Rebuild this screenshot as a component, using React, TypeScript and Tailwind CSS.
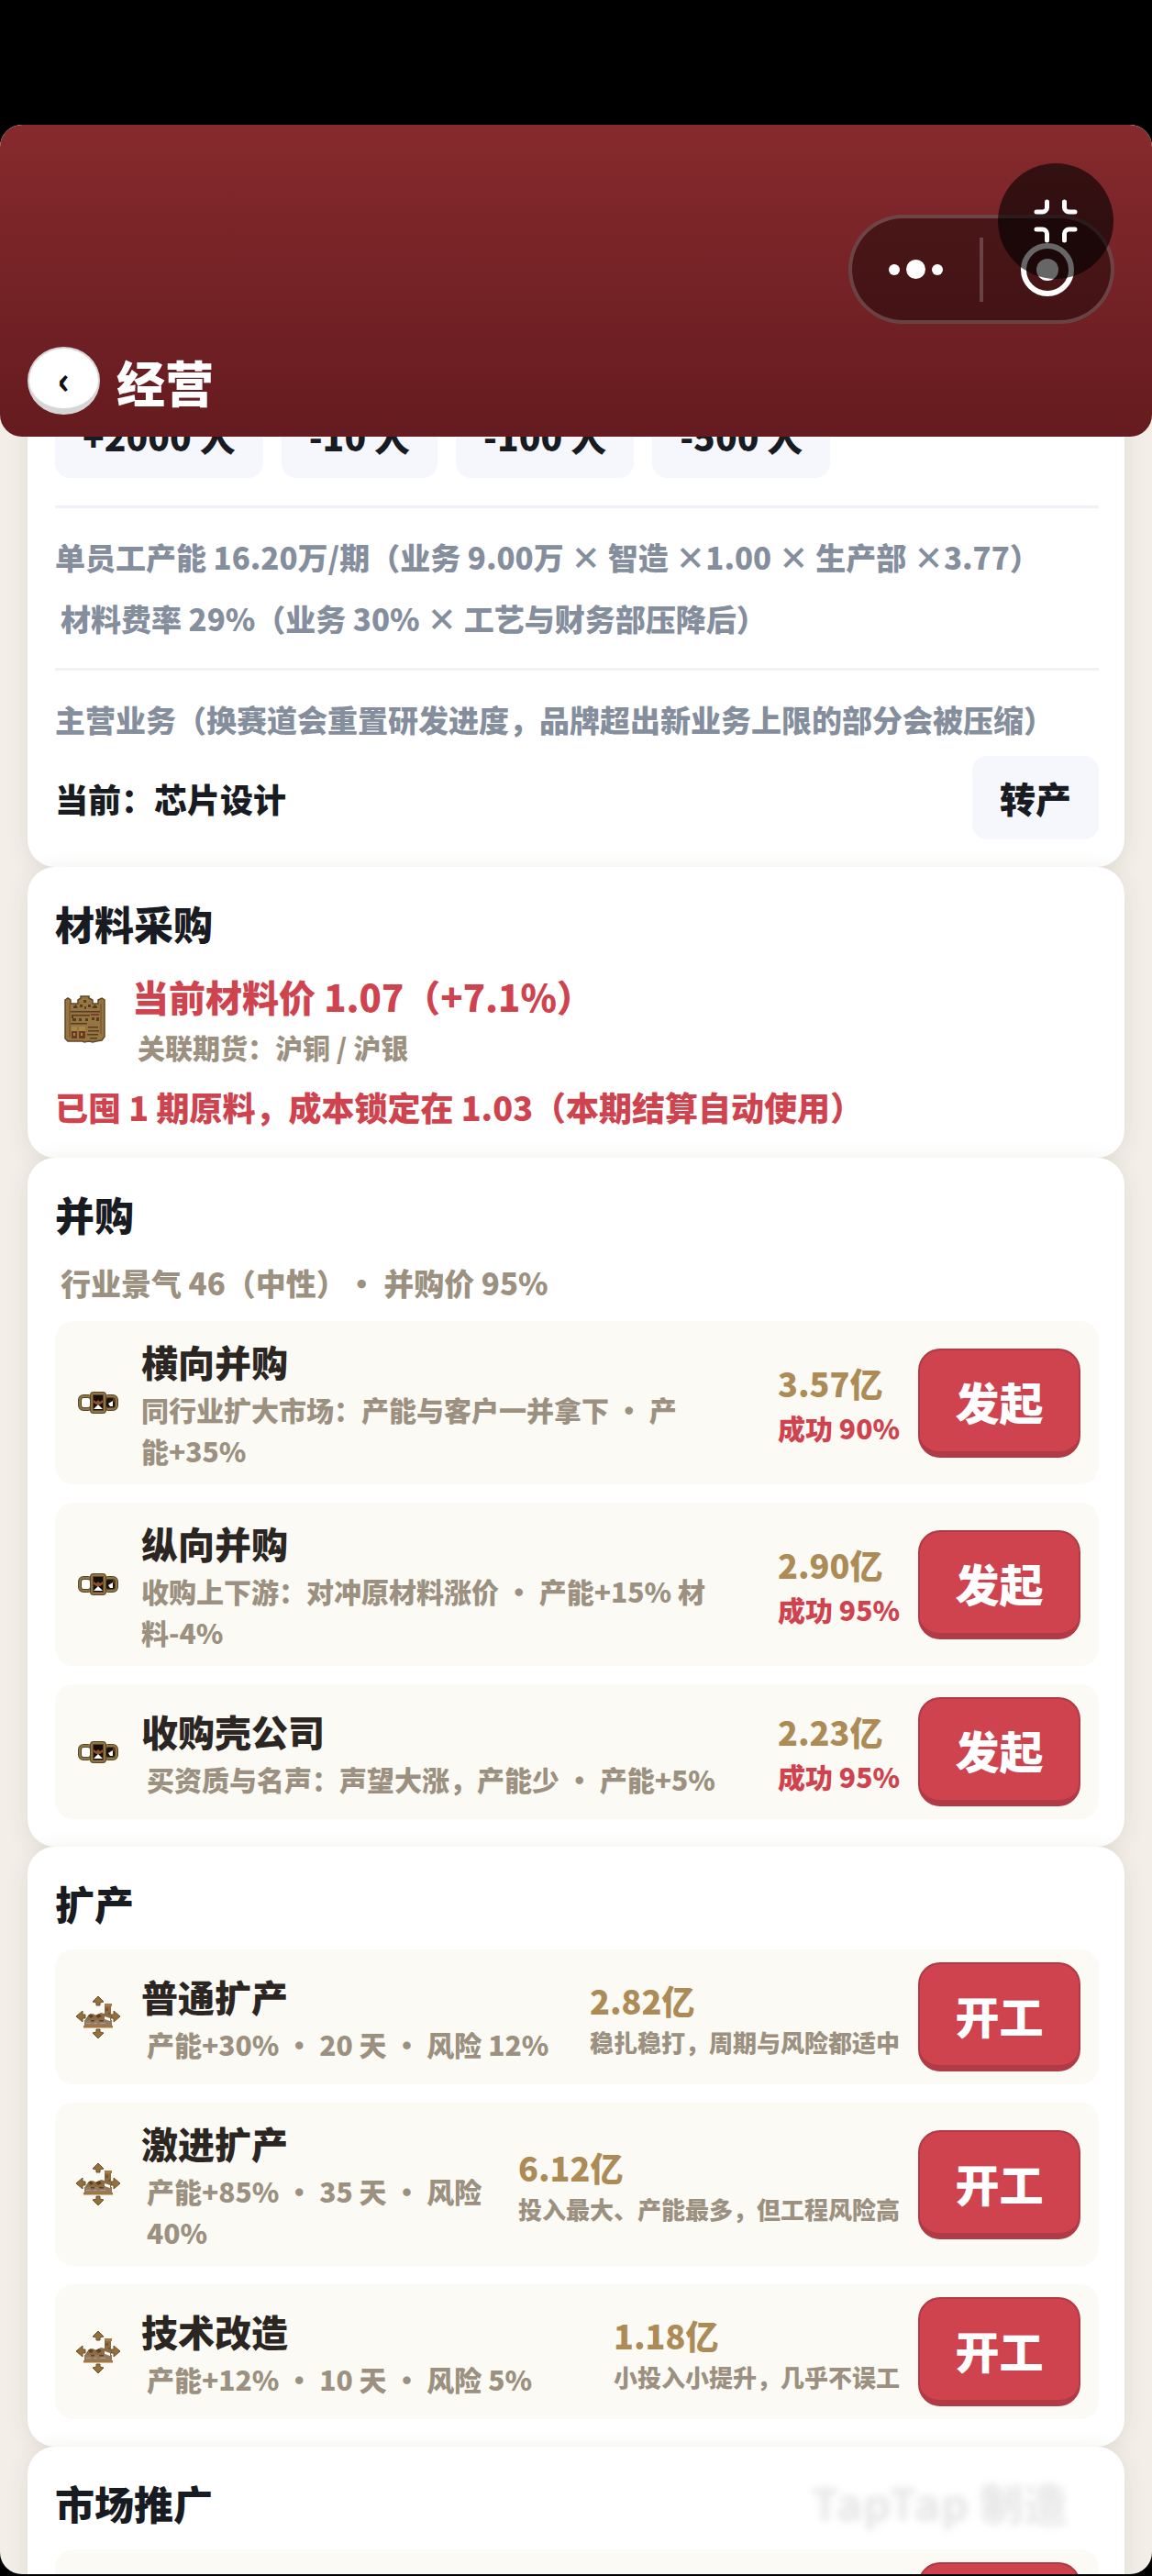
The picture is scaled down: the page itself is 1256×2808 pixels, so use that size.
import type { ReactNode } from 'react'

type MergerDeal = {
  name: string
  detail: string
  inset?: boolean
  price: string
  chance: string
}

type ExpansionPlan = {
  name: string
  detail: string
  price: string
  note: string
}

const headcountSteps = ['+2000 人', '-10 人', '-100 人', '-500 人']

const mergers: MergerDeal[] = [
  {
    name: '横向并购',
    detail: '同行业扩大市场：产能与客户一并拿下 • 产\n能+35%',
    price: '3.57亿',
    chance: '成功 90%',
  },
  {
    name: '纵向并购',
    detail: '收购上下游：对冲原材料涨价 • 产能+15% 材\n料-4%',
    price: '2.90亿',
    chance: '成功 95%',
  },
  {
    name: '收购壳公司',
    detail: '买资质与名声：声望大涨，产能少 • 产能+5%',
    inset: true,
    price: '2.23亿',
    chance: '成功 95%',
  },
]

const expansions: ExpansionPlan[] = [
  {
    name: '普通扩产',
    detail: '产能+30% • 20 天 • 风险 12%',
    price: '2.82亿',
    note: '稳扎稳打，周期与风险都适中',
  },
  {
    name: '激进扩产',
    detail: '产能+85% • 35 天 • 风险\n40%',
    price: '6.12亿',
    note: '投入最大、产能最多，但工程风险高',
  },
  {
    name: '技术改造',
    detail: '产能+12% • 10 天 • 风险 5%',
    price: '1.18亿',
    note: '小投入小提升，几乎不误工',
  },
]

function WarehouseIcon() {
  return (
    <svg width="46" height="52" viewBox="0 0 46 52" aria-hidden>
      <path
        d="M1 5l3-2 3 2v4h8V5l3-2V1h9v2l4 2v4h6V5l4-2 3 2v40l-3 4-6 1-4 1-4-1-5 1-2-1H4l-3-3z"
        fill="#967540"
        stroke="#5f4727"
        strokeWidth="1.500"
      />
      <path d="M6 9v37M40 9v33" stroke="#7a5a30" strokeWidth="1.500" />
      <g fill="#553d22">
        <path d="M7 17h32v1.500H7zM7 30h18v1.500H7z" />
        <path d="M10 12l3-2 2 4h-5zM30 14l3-4 3 2v2zM17 10h3v3h-3zM26 10h3v3h-3zM21 5h3v3h-3zM22 12h2v3h-2z" />
        <path d="M8 21h20v1.500H10V25H8z" />
        <path d="M9 25h4v3H9zM16 25h3v3h-3zM23 25h3v3h-3zM30 24h3v3h-3zM35 24h3v4h-3z" />
        <path d="M26 34h11v1.500H26zM26 38h12v1.500H26zM25 42h12v1.500H25zM28 46h8v1.500h-8z" />
      </g>
      <path d="M29 20h9v2h-9z" fill="#7c3b35" />
      <path d="M8 34h6v13H8zM16 34h7v13h-7z" fill="#6b3a22" />
      <path d="M8 34h6v5H8zM16 34h7v5h-7zM10 41h2v3h-2zM18 41h2v3h-2z" fill="#a98549" />
    </svg>
  )
}

function ChainIcon() {
  return (
    <svg width="44" height="24" viewBox="0 0 44 24" aria-hidden>
      <rect x="2" y="5" width="13" height="14" rx="4" fill="#fff" stroke="#57462a" strokeWidth="4" />
      <rect x="2" y="5" width="13" height="14" rx="4" fill="none" stroke="#8f7743" strokeWidth="2" />
      <rect x="29" y="5" width="13" height="14" rx="4" fill="#1b120c" stroke="#57462a" strokeWidth="4" />
      <rect x="29" y="5" width="13" height="14" rx="4" fill="none" stroke="#8f7743" strokeWidth="2" />
      <path d="M33 13l5-3v6h-3z" fill="#fff" />
      <path d="M38 7h2v5l-2-2z" fill="#74301f" />
      <rect x="15" y="2" width="14" height="20" rx="2" fill="#170e08" stroke="#57462a" strokeWidth="4" />
      <rect x="15" y="2" width="14" height="20" rx="2" fill="none" stroke="#94733f" strokeWidth="2" />
      <path d="M17 9l3 2 2-2 2 2 3-2v3l-3 2h-4l-3-2z" fill="#8a5230" />
      <path d="M17 19l5-5 5 5z" fill="#fff" />
    </svg>
  )
}

function FactoryIcon() {
  return (
    <svg width="50" height="46" viewBox="0 0 50 46" aria-hidden>
      <g fill="#94703c" stroke="#6b5029" strokeWidth="1">
        <path d="M25 0l6 6-4 1v3h-4V7l-4-1z" />
        <path d="M25 46l6-6-4-1v-3h-4v3l-4 1z" />
        <path d="M1 22l7-6v4h3v4H8v4z" />
        <path d="M49 22l-7-6v4h-3v4h3v4z" />
      </g>
      <path d="M10 27l4-6 5-2 4 2 5-3 4 1V9h7v24H10z" fill="#8d6b43" />
      <path d="M32 8h8v3h-8z" fill="#a27c49" />
      <path d="M10 26h30v8H10z" fill="#957a62" />
      <path d="M9 32h32v2.500H9z" fill="#a3763c" />
      <path d="M14 21l3-2 3 3-3 2zM22 21l4-2 3 3-4 2zM17 26h4v1.500h-4zM26 26h5v1.500h-5z" fill="#5d4122" />
      <path d="M33 13h3v3h-3zM36 18h2v2h-2z" fill="#765530" />
      <path d="M32 22l6 2v3l-6-2z" fill="#fff" />
      <path d="M12 29h5v1h-5zM20 29h4v1h-4zM27 29h6v1h-6z" fill="#b59a85" />
    </svg>
  )
}

function Capsule() {
  return (
    <div className="absolute top-[98px] right-[41px] flex h-[119px] w-[290px] items-center rounded-full border-4 border-white/20 bg-black/40">
      <button type="button" aria-label="更多" className="flex flex-1 items-center justify-center gap-[7px]">
        <span className="size-3 rounded-full bg-white" />
        <span className="size-[21px] rounded-full bg-white" />
        <span className="size-3 rounded-full bg-white" />
      </button>
      <span className="h-[70px] w-1 bg-white/20" />
      <button type="button" aria-label="关闭" className="flex flex-1 justify-center">
        <span className="flex size-[58px] items-center justify-center rounded-full border-[6px] border-white">
          <span className="size-6 rounded-full bg-white" />
        </span>
      </button>
    </div>
  )
}

function ShrinkButton() {
  return (
    <button
      type="button"
      aria-label="退出全屏"
      className="absolute top-[42px] right-[42px] flex size-[126px] items-center justify-center rounded-full bg-black/60"
    >
      <svg
        width="48"
        height="48"
        viewBox="0 0 48 48"
        fill="none"
        stroke="#fff"
        strokeWidth="5"
        strokeLinecap="round"
        aria-hidden
      >
        <path d="M3 14h6.500a5 5 0 0 0 5-5V3" />
        <path d="M45 14h-6.500a5 5 0 0 1-5-5V3" />
        <path d="M3 33h6.500a5 5 0 0 1 5 5v7" />
        <path d="M45 33h-6.500a5 5 0 0 0-5 5v7" />
      </svg>
    </button>
  )
}

function Card({ title, children }: { title?: string; children: ReactNode }) {
  return (
    <section
      className={`rounded-[30px] bg-white pr-7 pb-[30px] pl-[30px] shadow-[0_4px_24px_rgba(60,60,20,0.1)] ${
        title ? 'pt-[30px]' : ''
      }`}
    >
      {title && <h2 className="mb-5 text-[43px] leading-[62px] text-[#191b22]">{title}</h2>}
      {children}
    </section>
  )
}

function SoftButton({ children }: { children: ReactNode }) {
  return (
    <button
      type="button"
      className="shrink-0 rounded-2xl bg-[#f6f7fc] px-[30px] py-4 text-[39px] leading-[59px] text-[#191b22]"
    >
      {children}
    </button>
  )
}

function ActionRow({
  icon,
  name,
  detail,
  inset,
  aside,
  action,
}: {
  icon: ReactNode
  name: string
  detail: string
  inset?: boolean
  aside: ReactNode
  action: string
}) {
  return (
    <li className="flex items-center gap-5 rounded-[20px] bg-[#fbfaf5] px-5 py-3.5">
      <span className="flex w-[54px] shrink-0 justify-center">{icon}</span>
      <div className="flex-1">
        <h3 className="text-[40px] leading-[60px] text-[#2b2621]">{name}</h3>
        <p
          className={`text-[30px] leading-[45px] whitespace-pre text-[#9c9180] ${inset ? 'pl-1.5' : ''}`}
        >
          {detail}
        </p>
      </div>
      <div className="shrink-0">{aside}</div>
      <ActionButton>{action}</ActionButton>
    </li>
  )
}

function ActionButton({ children }: { children: ReactNode }) {
  return (
    <button
      type="button"
      className="w-[177px] shrink-0 rounded-3xl border-2 border-b-[7px] border-[#b03a45] bg-[#cf434e] py-5 text-[48px] leading-[70px] text-white"
    >
      {children}
    </button>
  )
}

function Price({ children }: { children: ReactNode }) {
  return <p className="text-[36px] leading-[54px] text-[#ac8b56]">{children}</p>
}

export default function App() {
  return (
    <div
      lang="zh-CN"
      className="flex h-screen flex-col bg-black pt-[136px] pb-0.5 font-['Noto_Sans_CJK_SC',sans-serif] font-black"
    >
      <div className="relative flex min-h-0 flex-1 flex-col overflow-hidden rounded-3xl bg-[#f3eee8]">
        <header className="relative z-10 flex h-[340px] shrink-0 items-end gap-[18px] rounded-3xl bg-linear-to-b from-[#862a2d] to-[#651b1f] px-[30px] pb-6">
          <button
            type="button"
            aria-label="返回"
            className="flex h-[74px] w-[79px] items-center justify-center rounded-[50%] border-2 border-b-[7px] border-[#d6d6d6] bg-white text-[40px] leading-none text-[#111]"
          >
            ‹
          </button>
          <h1 className="mb-2 text-[53px] leading-[56px] text-white">经营</h1>
          <Capsule />
          <ShrinkButton />
        </header>

        <main className="-mt-[46px] pr-[30px] pl-[30px]">
          <Card>
            <div className="flex gap-5">
              {headcountSteps.map((step) => (
                <SoftButton key={step}>{step}</SoftButton>
              ))}
            </div>
            <div className="mt-[30px] space-y-5 border-y-[3px] border-[#eff3f8] py-[30px] text-[33px] leading-[47px] text-[#858e9d]">
              <p>单员工产能 16.20万/期（业务 9.00万 × 智造 ×1.00 × 生产部 ×3.77）</p>
              <p className="pl-1.5">材料费率 29%（业务 30% × 工艺与财务部压降后）</p>
            </div>
            <p className="mt-[30px] text-[33px] leading-[47px] text-[#858e9d]">
              主营业务（换赛道会重置研发进度，品牌超出新业务上限的部分会被压缩）
            </p>
            <div className="mt-4 flex items-center justify-between">
              <p className="text-[36px] text-[#191b22]">当前：芯片设计</p>
              <SoftButton>转产</SoftButton>
            </div>
          </Card>

          <Card title="材料采购">
            <div className="flex items-center gap-[18px]">
              <span className="flex w-[66px] shrink-0 justify-center">
                <WarehouseIcon />
              </span>
              <div>
                <p className="text-[40px] leading-[58px] text-[#cf434f]">当前材料价 1.07（+7.1%）</p>
                <p className="pt-1 pl-1.5 text-[30px] leading-[45px] text-[#9c9180]">
                  关联期货：沪铜 / 沪银
                </p>
              </div>
            </div>
            <p className="mt-4 text-[36px] leading-[52px] text-[#cf434f]">
              已囤 1 期原料，成本锁定在 1.03（本期结算自动使用）
            </p>
          </Card>

          <Card title="并购">
            <p className="mb-[18px] pl-1.5 text-[33px] leading-[48px] text-[#9c9180]">
              行业景气 46（中性）• 并购价 95%
            </p>
            <ul className="space-y-5">
              {mergers.map((deal) => (
                <ActionRow
                  key={deal.name}
                  icon={<ChainIcon />}
                  name={deal.name}
                  detail={deal.detail}
                  inset={deal.inset}
                  action="发起"
                  aside={
                    <>
                      <Price>{deal.price}</Price>
                      <p className="text-[30px] leading-[45px] text-[#cf434f]">{deal.chance}</p>
                    </>
                  }
                />
              ))}
            </ul>
          </Card>

          <Card title="扩产">
            <ul className="space-y-5">
              {expansions.map((plan) => (
                <ActionRow
                  key={plan.name}
                  icon={<FactoryIcon />}
                  name={plan.name}
                  detail={plan.detail}
                  inset
                  action="开工"
                  aside={
                    <>
                      <Price>{plan.price}</Price>
                      <p className="text-[26px] leading-[38px] text-[#9c9180]">{plan.note}</p>
                    </>
                  }
                />
              ))}
            </ul>
          </Card>

          <Card title="市场推广">
            <div className="flex h-[147px] items-start justify-end rounded-[20px] bg-[#fbfaf5] px-5 py-3.5">
              <button
                type="button"
                aria-label="投放"
                className="h-[119px] w-[177px] rounded-3xl border-2 border-b-[7px] border-[#b03a45] bg-[#cf434e]"
              />
            </div>
          </Card>
        </main>

        <p className="pointer-events-none absolute right-[92px] bottom-[44px] text-[48px] leading-[70px] text-transparent [text-shadow:0_0_6px_rgba(0,0,0,0.05),0_0_14px_rgba(0,0,0,0.05)]">
          TapTap 制造
        </p>
      </div>
    </div>
  )
}
